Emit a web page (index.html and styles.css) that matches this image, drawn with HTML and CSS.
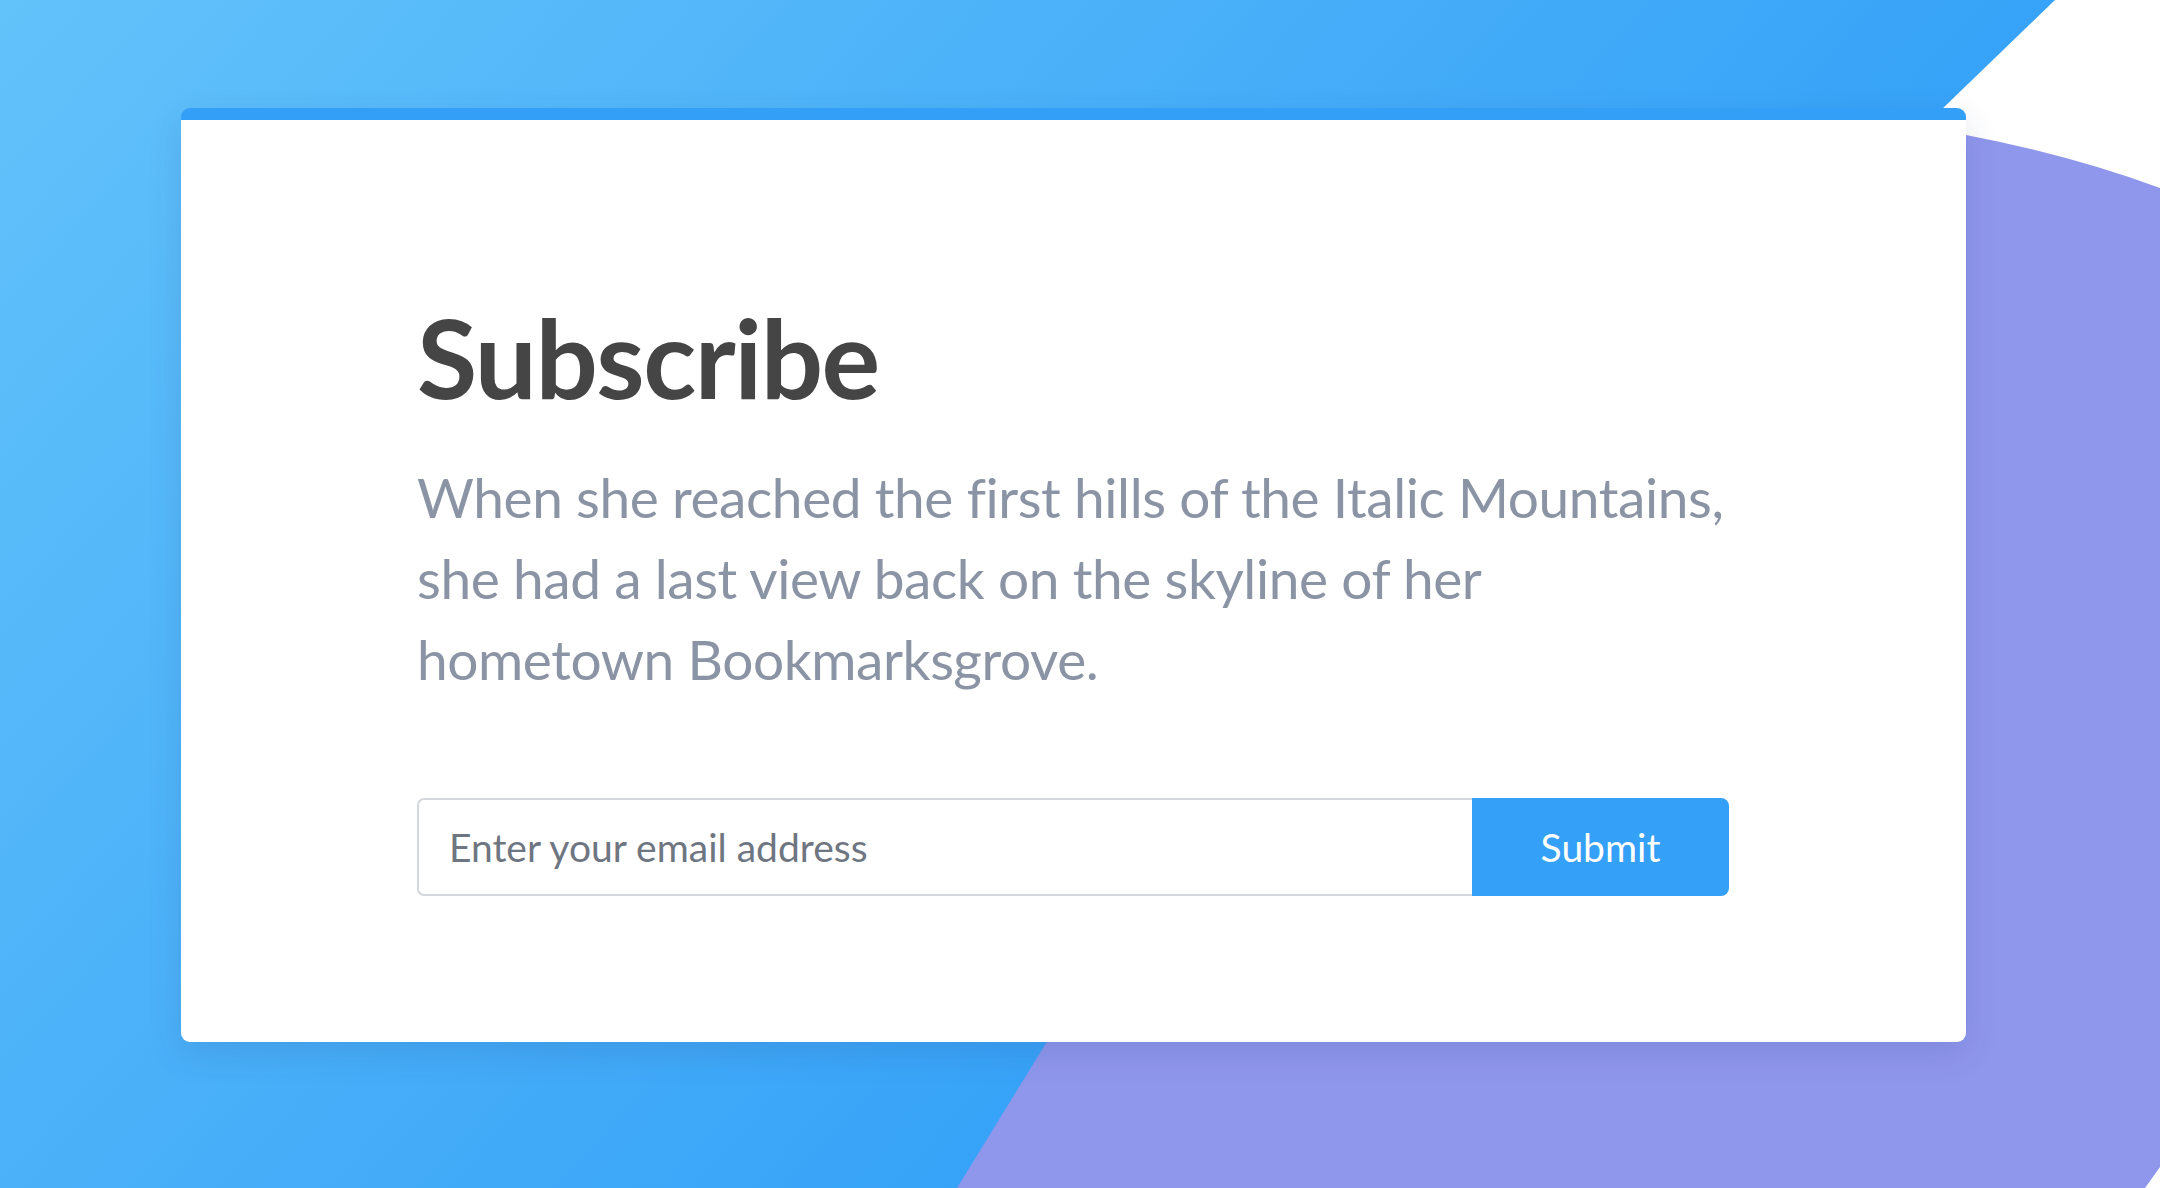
FILE: index.html
```html
<!DOCTYPE html>
<html lang="en">
<head>
<meta charset="utf-8">
<title>Subscribe</title>
<link rel="stylesheet" href="styles.css">
</head>
<body>
<svg class="backdrop" width="2160" height="1188" viewBox="0 0 2160 1188" aria-hidden="true">
  <defs>
    <linearGradient id="blueGrad" gradientUnits="userSpaceOnUse" x1="0" y1="0" x2="1108" y2="1024">
      <stop offset="0" stop-color="#62c2fa"/>
      <stop offset="1" stop-color="#37a3f8"/>
    </linearGradient>
  </defs>
  <polygon points="0,0 2055,0 1940,111 1600,700 1250,1188 0,1188" fill="url(#blueGrad)"/>
  <path d="M957,1188 L1300,630 L1750,132 Q1860,128 1966,135 Q2070,155 2160,188 L2160,1167 L2145,1188 Z" fill="#8f97ec"/>
</svg>
<main class="page">
  <section class="card">
    <h1 class="title">Subscribe</h1>
    <p class="lead">When she reached the first hills of the Italic Mountains, she had a last view back on the skyline of her hometown Bookmarksgrove.</p>
    <form class="form" onsubmit="return false">
      <input class="email" type="email" placeholder="Enter your email address">
      <button class="submit" type="submit">Submit</button>
    </form>
  </section>
</main>
</body>
</html>
```
FILE: styles.css
```css
* { box-sizing: border-box; }
html, body {
  margin: 0;
  padding: 0;
  width: 2160px;
  height: 1188px;
  overflow: hidden;
  background: #ffffff;
  font-family: Lato, "Open Sans", "Liberation Sans", sans-serif;
}
.backdrop {
  position: absolute;
  left: 0;
  top: 0;
  z-index: 0;
}
.page {
  position: relative;
  z-index: 1;
  padding: 108px 194px 0 181px;
}
.card {
  width: 1785px;
  height: 934px;
  background: #ffffff;
  border-top: 12px solid #339ff7;
  border-radius: 9px;
  box-shadow: 0 12px 34px rgba(40, 60, 120, 0.14);
  padding: 170px 237px 0 236px;
}
.title {
  margin: 0;
  font-size: 110px;
  line-height: 132px;
  font-weight: 700;
  color: #454545;
  letter-spacing: -1.5px;
}
.lead {
  margin: 35px 0 0;
  font-size: 55px;
  line-height: 81px;
  font-weight: 400;
  color: #8a94a4;
  letter-spacing: -0.42px;
}
.form {
  display: flex;
  margin-top: 98px;
  height: 98px;
}
.email {
  flex: 1;
  height: 100%;
  border: 2px solid #d3d6db;
  border-right: none;
  border-radius: 7px 0 0 7px;
  padding: 0 30px;
  font-family: inherit;
  font-size: 39px;
  color: #6e7681;
  outline: none;
  background: #fff;
}
.email::placeholder { color: #6e7681; opacity: 1; }
.submit {
  width: 257px;
  height: 100%;
  border: none;
  border-radius: 0 8px 8px 0;
  background: #35a0f7;
  color: #ffffff;
  font-family: inherit;
  font-size: 39px;
  cursor: pointer;
}
```
